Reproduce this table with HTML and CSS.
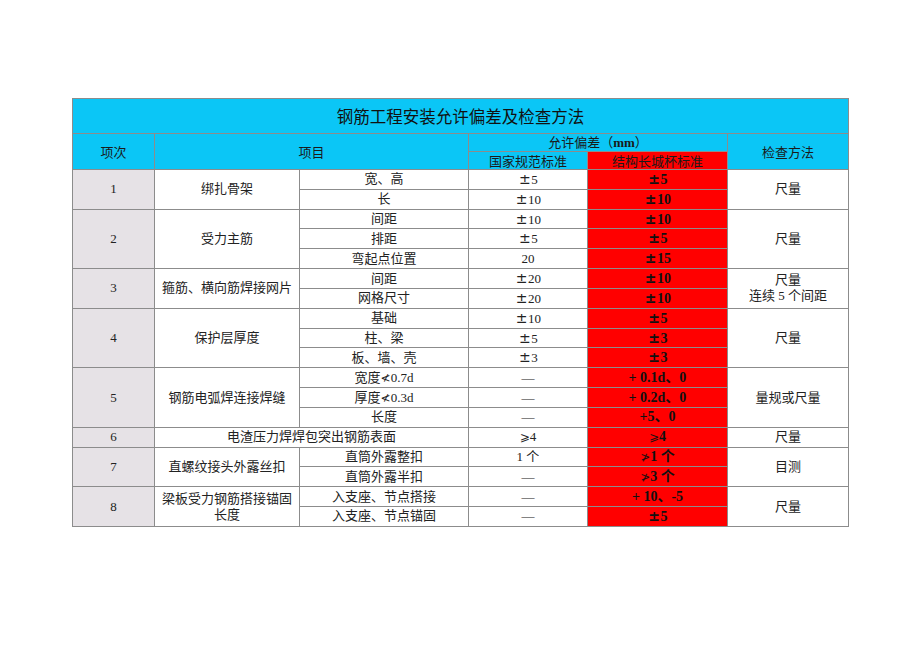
FILE: index.html
```html
<!DOCTYPE html>
<html lang="zh">
<head>
<meta charset="utf-8">
<title>钢筋工程安装允许偏差及检查方法</title>
<link rel="stylesheet" href="styles.css">
</head>
<body>
<div class="page">
<table class="sheet">
<colgroup>
<col class="c1"><col class="c2"><col class="c3"><col class="c4"><col class="c5"><col class="c6">
</colgroup>
<thead>
<tr class="title-row"><th colspan="6" class="title">钢筋工程安装允许偏差及检查方法</th></tr>
<tr class="h1"><th rowspan="2" class="hd">项次</th><th rowspan="2" colspan="2" class="hd">项目</th><th colspan="2" class="hd">允许偏差（<b>mm</b>）</th><th rowspan="2" class="hd">检查方法</th></tr>
<tr class="h2"><th class="hd">国家规范标准</th><th class="hd red-h">结构长城杯标准</th></tr>
</thead>
<tbody>
<tr><td rowspan="2" class="no">1</td><td rowspan="2">绑扎骨架</td><td>宽、高</td><td><span class="sym">±</span>5</td><td class="red"><span class="sym">±</span>5</td><td rowspan="2">尺量</td></tr>
<tr><td>长</td><td><span class="sym">±</span>10</td><td class="red"><span class="sym">±</span>10</td></tr>
<tr><td rowspan="3" class="no">2</td><td rowspan="3">受力主筋</td><td>间距</td><td><span class="sym">±</span>10</td><td class="red"><span class="sym">±</span>10</td><td rowspan="3">尺量</td></tr>
<tr><td>排距</td><td><span class="sym">±</span>5</td><td class="red"><span class="sym">±</span>5</td></tr>
<tr><td>弯起点位置</td><td>20</td><td class="red"><span class="sym">±</span>15</td></tr>
<tr><td rowspan="2" class="no">3</td><td rowspan="2">箍筋、横向筋焊接网片</td><td>间距</td><td><span class="sym">±</span>20</td><td class="red"><span class="sym">±</span>10</td><td rowspan="2">尺量<br>连续 5 个间距</td></tr>
<tr><td>网格尺寸</td><td><span class="sym">±</span>20</td><td class="red"><span class="sym">±</span>10</td></tr>
<tr><td rowspan="3" class="no">4</td><td rowspan="3">保护层厚度</td><td>基础</td><td><span class="sym">±</span>10</td><td class="red"><span class="sym">±</span>5</td><td rowspan="3">尺量</td></tr>
<tr><td>柱、梁</td><td><span class="sym">±</span>5</td><td class="red"><span class="sym">±</span>3</td></tr>
<tr><td>板、墙、壳</td><td><span class="sym">±</span>3</td><td class="red"><span class="sym">±</span>3</td></tr>
<tr><td rowspan="3" class="no">5</td><td rowspan="3">钢筋电弧焊连接焊缝</td><td>宽度<span class="sym2">≮</span>0.7d</td><td>—</td><td class="red">+ 0.1d、0</td><td rowspan="3">量规或尺量</td></tr>
<tr><td>厚度<span class="sym2">≮</span>0.3d</td><td>—</td><td class="red">+ 0.2d、0</td></tr>
<tr><td>长度</td><td>—</td><td class="red">+5、0</td></tr>
<tr><td class="no">6</td><td colspan="2">电渣压力焊焊包突出钢筋表面</td><td><span class="sym2">⩾</span>4</td><td class="red"><span class="sym2">⩾</span>4</td><td>尺量</td></tr>
<tr><td rowspan="2" class="no">7</td><td rowspan="2">直螺纹接头外露丝扣</td><td>直筒外露整扣</td><td>1 个</td><td class="red"><span class="sym2">≯</span>1 个</td><td rowspan="2">目测</td></tr>
<tr><td>直筒外露半扣</td><td>—</td><td class="red"><span class="sym2">≯</span>3 个</td></tr>
<tr><td rowspan="2" class="no">8</td><td rowspan="2">梁板受力钢筋搭接锚固<br>长度</td><td>入支座、节点搭接</td><td>—</td><td class="red">+ 10、-5</td><td rowspan="2">尺量</td></tr>
<tr><td>入支座、节点锚固</td><td>—</td><td class="red"><span class="sym">±</span>5</td></tr>
</tbody>
</table>
</div>
</body>
</html>
```
FILE: styles.css
```css
html, body {
  margin: 0;
  padding: 0;
  background: #ffffff;
}
.page {
  padding: 98px 0 0 72px;
}
.sheet {
  border-collapse: collapse;
  table-layout: fixed;
  width: 777px;
  border: 1px solid #6e6e6e;
  font-family: "Liberation Serif", "Noto Sans CJK SC", serif;
  font-size: 13px;
  color: #222;
}
.c1 { width: 82px; }
.c2 { width: 145px; }
.c3 { width: 169px; }
.c4 { width: 119px; }
.c5 { width: 140px; }
.c6 { width: 121px; }
.sheet th, .sheet td {
  border: 1px solid #8c8c8c;
  padding: 0;
  text-align: center;
  vertical-align: middle;
  line-height: 16px;
  overflow: hidden;
  white-space: nowrap;
}
.title-row { height: 35px; }
.title {
  background: #0bc6f6;
  font-family: "Noto Sans CJK SC", sans-serif;
  font-weight: normal;
  font-size: 16.5px;
  color: #111;
}
.h1 { height: 17px; }
.h2 { height: 18px; }
.hd {
  background: #0bc6f6;
  font-family: "Noto Sans CJK SC", sans-serif;
  font-weight: normal;
  font-size: 13px;
  color: #1a1a1a;
  line-height: 15px;
}
.hd b {
  font-family: "Liberation Serif", serif;
  font-weight: bold;
}
.red-h {
  background: #ff0000;
}
tbody tr { height: 19.83px; }
.no {
  background: #e6e2e6;
}
.red {
  background: #ff0000;
  font-weight: bold;
  font-size: 14px;
  color: #111;
}
.sym {
  display: inline-block;
  width: 13px;
  text-align: center;
  font-family: "DejaVu Serif", serif;
  font-size: 14px;
}
.sym2 {
  font-family: "DejaVu Sans", sans-serif;
  font-weight: normal;
  font-size: 12px;
}
```
